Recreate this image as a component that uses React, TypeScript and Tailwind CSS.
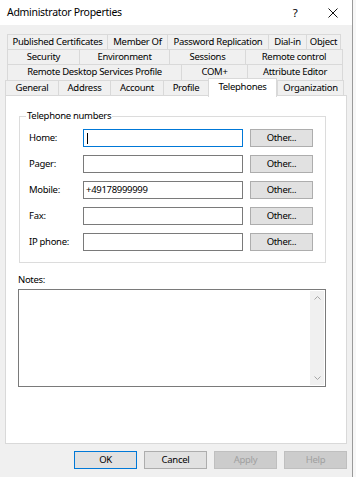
import React from 'react';

type Tab = { label: string; w: string; active?: boolean };

const rows: { ml: string; h: string; tabs: Tab[] }[] = [
  {
    ml: 'ml-[7px]',
    h: 'h-[15px]',
    tabs: [
      { label: 'Published Certificates', w: 'w-[100px]' },
      { label: 'Member Of', w: 'w-[60px]' },
      { label: 'Password Replication', w: 'w-[101px]' },
      { label: 'Dial-in', w: 'w-[38px]' },
      { label: 'Object', w: 'w-[35px]' },
    ],
  },
  {
    ml: 'ml-[7px]',
    h: 'h-[15px]',
    tabs: [
      { label: 'Security', w: 'w-[72px]' },
      { label: 'Environment', w: 'w-[90px]' },
      { label: 'Sessions', w: 'w-[76px]' },
      { label: 'Remote control', w: 'w-[98px]' },
    ],
  },
  {
    ml: 'ml-[7px]',
    h: 'h-[16px]',
    tabs: [
      { label: 'Remote Desktop Services Profile', w: 'w-[174px]' },
      { label: 'COM+', w: 'w-[66px]' },
      { label: 'Attribute Editor', w: 'w-[96px]' },
    ],
  },
  {
    ml: 'ml-[5px]',
    h: 'h-[15px]',
    tabs: [
      { label: 'General', w: 'w-[53px]' },
      { label: 'Address', w: 'w-[52px]' },
      { label: 'Account', w: 'w-[53px]' },
      { label: 'Profile', w: 'w-[45px]' },
      { label: 'Telephones', w: 'w-[69px]', active: true },
      { label: 'Organization', w: 'w-[67px]' },
    ],
  },
];

const phones = [
  { label: 'Home:', value: '', focused: true },
  { label: 'Pager:', value: '' },
  { label: 'Mobile:', value: '+49178999999' },
  { label: 'Fax:', value: '' },
  { label: 'IP phone:', value: '' },
];

function TabRow({ ml, h, tabs }: { ml: string; h: string; tabs: Tab[] }) {
  return (
    <div className={`flex items-start ${ml} ${h}`}>
      {tabs.map((t, i) => {
        const last = i === tabs.length - 1;
        if (t.active) {
          return (
            <div
              key={t.label}
              className={`relative z-10 -mt-[2px] h-[19px] ${t.w} shrink-0 border-x border-t border-[#d9d9d9] bg-white pt-[1px] text-center leading-[13px]`}
            >
              {t.label}
            </div>
          );
        }
        return (
          <div
            key={t.label}
            className={`h-full ${t.w} shrink-0 border-l border-t border-[#d9d9d9] ${last ? 'border-r' : ''} flex items-center justify-center whitespace-nowrap`}
          >
            {t.label}
          </div>
        );
      })}
    </div>
  );
}

function DlgButton({ children, primary, disabled }: { children: string; primary?: boolean; disabled?: boolean }) {
  return (
    <div
      className={`flex h-[18px] w-[63px] items-center justify-center border ${
        primary
          ? 'border-[#0078d7] bg-[#e1e1e1] text-black'
          : disabled
            ? 'border-[#bfbfbf] bg-[#cccccc] text-[#a0a0a0]'
            : 'border-[#adadad] bg-[#e1e1e1] text-black'
      }`}
    >
      {children}
    </div>
  );
}

export default function App() {
  return (
    <div className="flex h-[477px] w-[356px] overflow-hidden bg-[#f7f7f7] font-['Noto_Sans',sans-serif] text-[9.5px] tracking-[-0.3px] text-black">
      <div className="flex h-full w-[353px] flex-col border-r border-[#9a9a9a] bg-[#f0f0f0]">
        {/* title bar */}
        <div className="flex h-[25px] items-center bg-white pl-[7px] text-[10.5px]">
          <span className="flex-1">Administrator Properties</span>
          <span className="w-[20px] text-center text-[11.5px]">?</span>
          <svg className="ml-[23px] mr-[14px]" width="10" height="10" viewBox="0 0 10 10">
            <path d="M0.5 0.5 L9.5 9.5 M9.5 0.5 L0.5 9.5" stroke="#111" strokeWidth="1" />
          </svg>
        </div>

        {/* tabs */}
        <div className="mt-[9px] flex flex-col">
          {rows.map((r, i) => (
            <TabRow key={i} ml={r.ml} h={r.h} tabs={r.tabs} />
          ))}
        </div>

        {/* page */}
        <div className="mx-[5px] flex h-[349px] flex-col border border-[#d9d9d9] bg-white">
          <fieldset className="ml-[13px] mt-[13px] w-[307px] border border-[#dcdcdc] pb-[11px]">
            <legend className="ml-[6px] px-[1px] leading-[14px]">Telephone numbers</legend>
            <div className="mt-[6px] flex flex-col gap-[8px]">
              {phones.map((p) => (
                <div key={p.label} className="flex h-[18px] items-center">
                  <span className="w-[63px] pl-[9px]">{p.label}</span>
                  <div
                    className={`flex h-[18px] w-[160px] items-center border px-[2px] ${
                      p.focused ? 'border-[#0078d7]' : 'border-[#7a7a7a]'
                    }`}
                  >
                    {p.focused ? <span className="ml-[1px] h-[11px] w-[1px] bg-black" /> : p.value}
                  </div>
                  <div className="ml-[7px]">
                    <DlgButton>Other...</DlgButton>
                  </div>
                </div>
              ))}
            </div>
          </fieldset>

          <div className="ml-[12px] mt-[10px] leading-[14px]">Notes:</div>
          <div className="ml-[12px] mt-[2px] flex h-[98px] w-[308px] justify-end border border-[#7a7a7a] p-[1px]">
            <div className="flex w-[14px] flex-col items-center justify-between bg-[#f0f0f0] py-[5px]">
              <svg width="7" height="4" viewBox="0 0 7 4">
                <path d="M0.5 3.5 L3.5 0.5 L6.5 3.5" fill="none" stroke="#a6a6a6" strokeWidth="1" />
              </svg>
              <svg width="7" height="4" viewBox="0 0 7 4">
                <path d="M0.5 0.5 L3.5 3.5 L6.5 0.5" fill="none" stroke="#a6a6a6" strokeWidth="1" />
              </svg>
            </div>
          </div>
        </div>

        {/* buttons */}
        <div className="mt-[7px] flex justify-end gap-[7px] pr-[5px]">
          <DlgButton primary>OK</DlgButton>
          <DlgButton>Cancel</DlgButton>
          <DlgButton disabled>Apply</DlgButton>
          <DlgButton disabled>Help</DlgButton>
        </div>
      </div>
    </div>
  );
}
